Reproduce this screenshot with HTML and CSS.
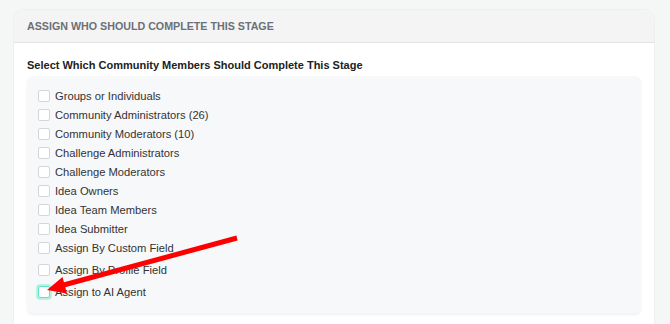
FILE: index.html
```html
<!DOCTYPE html>
<html>
<head>
<meta charset="utf-8">
<link rel="stylesheet" href="styles.css">
</head>
<body>
<div class="card">
  <div class="card-header">ASSIGN WHO SHOULD COMPLETE THIS STAGE</div>
  <div class="card-body">
    <div class="title">Select Which Community Members Should Complete This Stage</div>
    <div class="list">
      <label class="row"><span class="cb"></span>Groups or Individuals</label>
      <label class="row"><span class="cb"></span>Community Administrators (26)</label>
      <label class="row"><span class="cb"></span>Community Moderators (10)</label>
      <label class="row"><span class="cb"></span>Challenge Administrators</label>
      <label class="row"><span class="cb"></span>Challenge Moderators</label>
      <label class="row"><span class="cb"></span>Idea Owners</label>
      <label class="row"><span class="cb"></span>Idea Team Members</label>
      <label class="row"><span class="cb"></span>Idea Submitter</label>
      <label class="row"><span class="cb"></span>Assign By Custom Field</label>
      <label class="row tall gap"><span class="cb"></span>Assign By Profile Field</label>
      <label class="row tall"><span class="cb focus"></span>Assign to AI Agent</label>
    </div>
  </div>
</div>
<svg class="arrow" width="670" height="324" viewBox="0 0 670 324">
  <line x1="237" y1="238" x2="60" y2="286" stroke="#ff0000" stroke-width="5"/>
  <polygon points="47,290 62.5,277 67,293.5" fill="#ff0000"/>
</svg>
</body>
</html>
```
FILE: styles.css
```css
html, body {
  margin: 0;
  padding: 0;
}
body {
  background: #f5f6f6;
  font-family: "Liberation Sans", Arial, sans-serif;
  width: 670px;
  height: 324px;
  overflow: hidden;
  position: relative;
}
.card {
  margin: 10px 0 0 14px;
  width: 640px;
  height: 330px;
  background: #fff;
  border-radius: 10px 10px 0 0;
  box-shadow: 0 0 0 1px #efefef;
}
.card-header {
  height: 33px;
  box-sizing: border-box;
  background: #f4f4f4;
  border-radius: 10px 10px 0 0;
  border-bottom: 1px solid #e2e2e2;
  padding: 9px 0 0 13px;
  font-size: 10.7px;
  font-weight: bold;
  color: #6b7078;
  line-height: 15px;
}
.card-body {
  padding: 0 13px;
}
.title {
  padding-top: 14px;
  font-size: 11px;
  font-weight: bold;
  color: #222;
  line-height: 16px;
  height: 16px;
}
.list {
  margin-top: 3px;
  background: #f7f8fa;
  border-radius: 6px;
  padding: 10px 11px 11px;
  box-shadow: 0 2px 3px rgba(0,0,0,0.06);
  height: 216px;
}
.row {
  display: flex;
  align-items: center;
  height: 19px;
  font-size: 11.2px;
  color: #333;
}
.row.tall {
  height: 22px;
}
.row.gap {
  margin-top: 2px;
}
.cb {
  width: 10px;
  height: 10px;
  border: 1px solid #d4d6d9;
  background: #fff;
  border-radius: 2px;
  margin-right: 5px;
  flex: none;
}
.cb.focus {
  border-color: #63e0c4;
  box-shadow: 0 0 0 2px #b9f1e3;
}
.arrow {
  position: absolute;
  left: 0;
  top: 0;
}
```
